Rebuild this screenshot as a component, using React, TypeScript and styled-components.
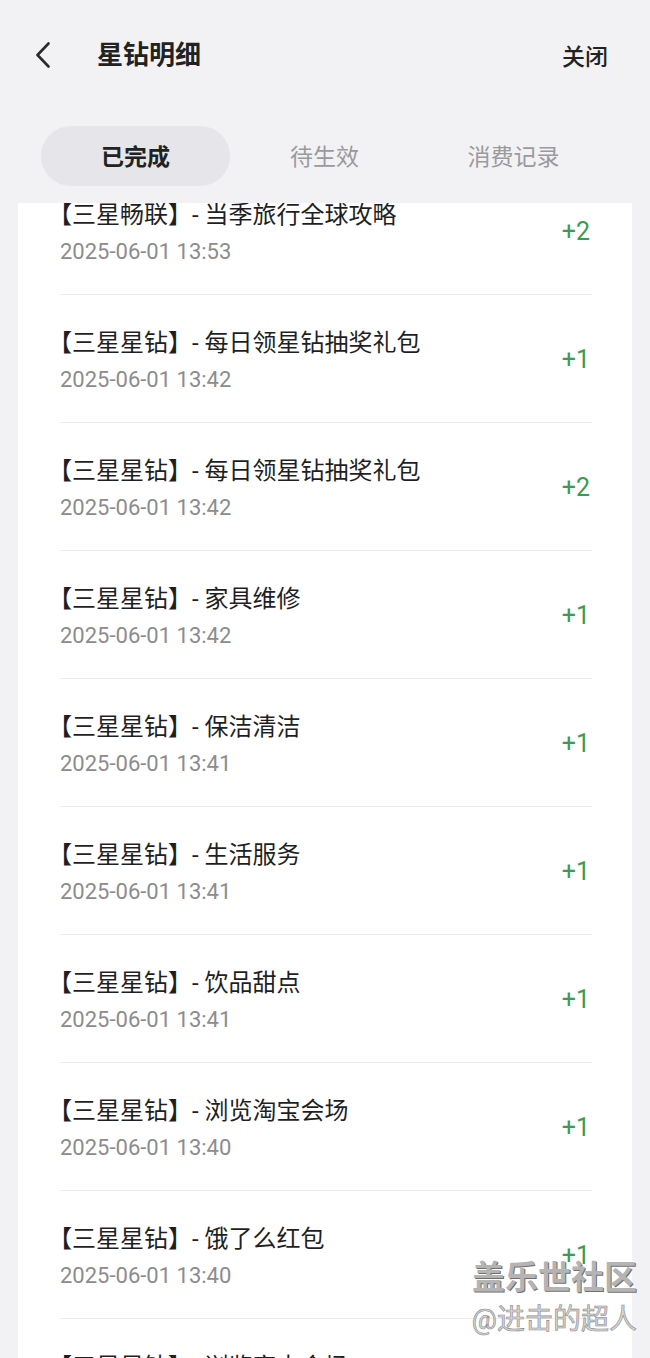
import styled, { createGlobalStyle } from "styled-components";

const GlobalStyle = createGlobalStyle`
  html, body {
    margin: 0;
    padding: 0;
    background: #f2f2f4;
  }
  body {
    font-family: Roboto, "Noto Sans CJK SC", sans-serif;
    color: #1f1f1f;
  }
`;

type Record = {
    title: string;
    time: string;
    amount: number;
};

const records: Record[] = [
    { title: "【三星畅联】- 当季旅行全球攻略", time: "2025-06-01 13:53", amount: 2 },
    { title: "【三星星钻】- 每日领星钻抽奖礼包", time: "2025-06-01 13:42", amount: 1 },
    { title: "【三星星钻】- 每日领星钻抽奖礼包", time: "2025-06-01 13:42", amount: 2 },
    { title: "【三星星钻】- 家具维修", time: "2025-06-01 13:42", amount: 1 },
    { title: "【三星星钻】- 保洁清洁", time: "2025-06-01 13:41", amount: 1 },
    { title: "【三星星钻】- 生活服务", time: "2025-06-01 13:41", amount: 1 },
    { title: "【三星星钻】- 饮品甜点", time: "2025-06-01 13:41", amount: 1 },
    { title: "【三星星钻】- 浏览淘宝会场", time: "2025-06-01 13:40", amount: 1 },
    { title: "【三星星钻】- 饿了么红包", time: "2025-06-01 13:40", amount: 1 },
    { title: "【三星星钻】- 浏览家电会场", time: "2025-06-01 13:40", amount: 1 },
];

const tabs = ["已完成", "待生效", "消费记录"];

const App = () => {
    return (<Page>
        <GlobalStyle />
        <Header>
            <BackButton aria-label="返回">
                <svg width="16" height="26" viewBox="0 0 16 26" fill="none">
                    <path d="M13.5 1.5 L2.5 13 L13.5 24.5" stroke="#2b2b2b" strokeWidth="2.6" strokeLinecap="round" strokeLinejoin="round" />
                </svg>
            </BackButton>
            <Title>星钻明细</Title>
            <CloseLink>关闭</CloseLink>
        </Header>
        <TabBar>
            {tabs.map((t, i) => (
                <Tab key={t} $active={i === 0}>{t}</Tab>
            ))}
        </TabBar>
        <Card>
            <List>
                {records.map((r, i) => (
                    <Row key={i}>
                        <RowText>
                            <RowTitle>{r.title}</RowTitle>
                            <RowTime>{r.time}</RowTime>
                        </RowText>
                        <Amount>+{r.amount}</Amount>
                    </Row>
                ))}
            </List>
        </Card>
        <Watermark>
            <WatermarkBrand>盖乐世社区</WatermarkBrand>
            <WatermarkUser>@进击的超人</WatermarkUser>
        </Watermark>
    </Page>);
}

const Page = styled.div`
    position: relative;
    height: 1358px;
    overflow: hidden;
    display: flex;
    flex-direction: column;
    background: #f2f2f4;
`

const Header = styled.header`
    height: 110px;
    flex-shrink: 0;
    display: flex;
    align-items: center;
    padding: 0 42px 0 35px;
`

const BackButton = styled.div`
    width: 16px;
    height: 26px;
    display: flex;
    margin-right: 46px;
`

const Title = styled.h1`
    margin: 0;
    flex: 1;
    font-size: 26px;
    font-weight: 700;
    color: #222;
    line-height: 36px;
`

const CloseLink = styled.span`
    font-size: 23px;
    font-weight: 500;
    color: #222;
`

const TabBar = styled.nav`
    flex-shrink: 0;
    display: grid;
    grid-template-columns: repeat(3, 1fr);
    margin: 16px 42px 0 41px;
    height: 60px;
`

const Tab = styled.div<{ $active?: boolean }>`
    display: flex;
    align-items: center;
    justify-content: center;
    padding-bottom: 3px;
    box-sizing: border-box;
    border-radius: 30px;
    font-size: 23px;
    font-weight: ${p => p.$active ? 700 : 400};
    color: ${p => p.$active ? "#222" : "#9a9a9c"};
    background: ${p => p.$active ? "#e5e5ea" : "transparent"};
`

const Card = styled.section`
    flex: 1;
    margin: 17px 18px 0;
    background: #fff;
    overflow: hidden;
`

const List = styled.ul`
    list-style: none;
    margin: -36px 0 0;
    padding: 0 40px 0 42px;
`

const Row = styled.li`
    display: flex;
    align-items: center;
    justify-content: space-between;
    padding: 32px 0 27px;
    border-bottom: 1px solid #ececec;
`

const RowText = styled.div`
    display: flex;
    flex-direction: column;
`

const RowTitle = styled.span`
    font-size: 24px;
    line-height: 32px;
    color: #1f1f1f;
    text-indent: -12px;
`

const RowTime = styled.span`
    margin-top: 6px;
    font-size: 22px;
    line-height: 30px;
    color: #8c8c8c;
`

const Amount = styled.span`
    font-size: 25px;
    color: #3b9b4f;
    margin: -4px 2px 0 0;
`

const Watermark = styled.div`
    position: absolute;
    right: 13px;
    bottom: 18px;
    display: flex;
    flex-direction: column;
    align-items: flex-end;
    pointer-events: none;
`

const WatermarkBrand = styled.span`
    font-size: 33px;
    font-weight: 700;
    line-height: 44px;
    color: #b4b4b4;
    text-shadow: 1px 1px 0 #707070, -1px -1px 0 #fff;
`

const WatermarkUser = styled.span`
    font-size: 28px;
    line-height: 40px;
    color: #d4d4d4;
    -webkit-text-stroke: 0.6px #8a8a8a;
    text-shadow: 0 0 2px #fff;
`

export default App;
